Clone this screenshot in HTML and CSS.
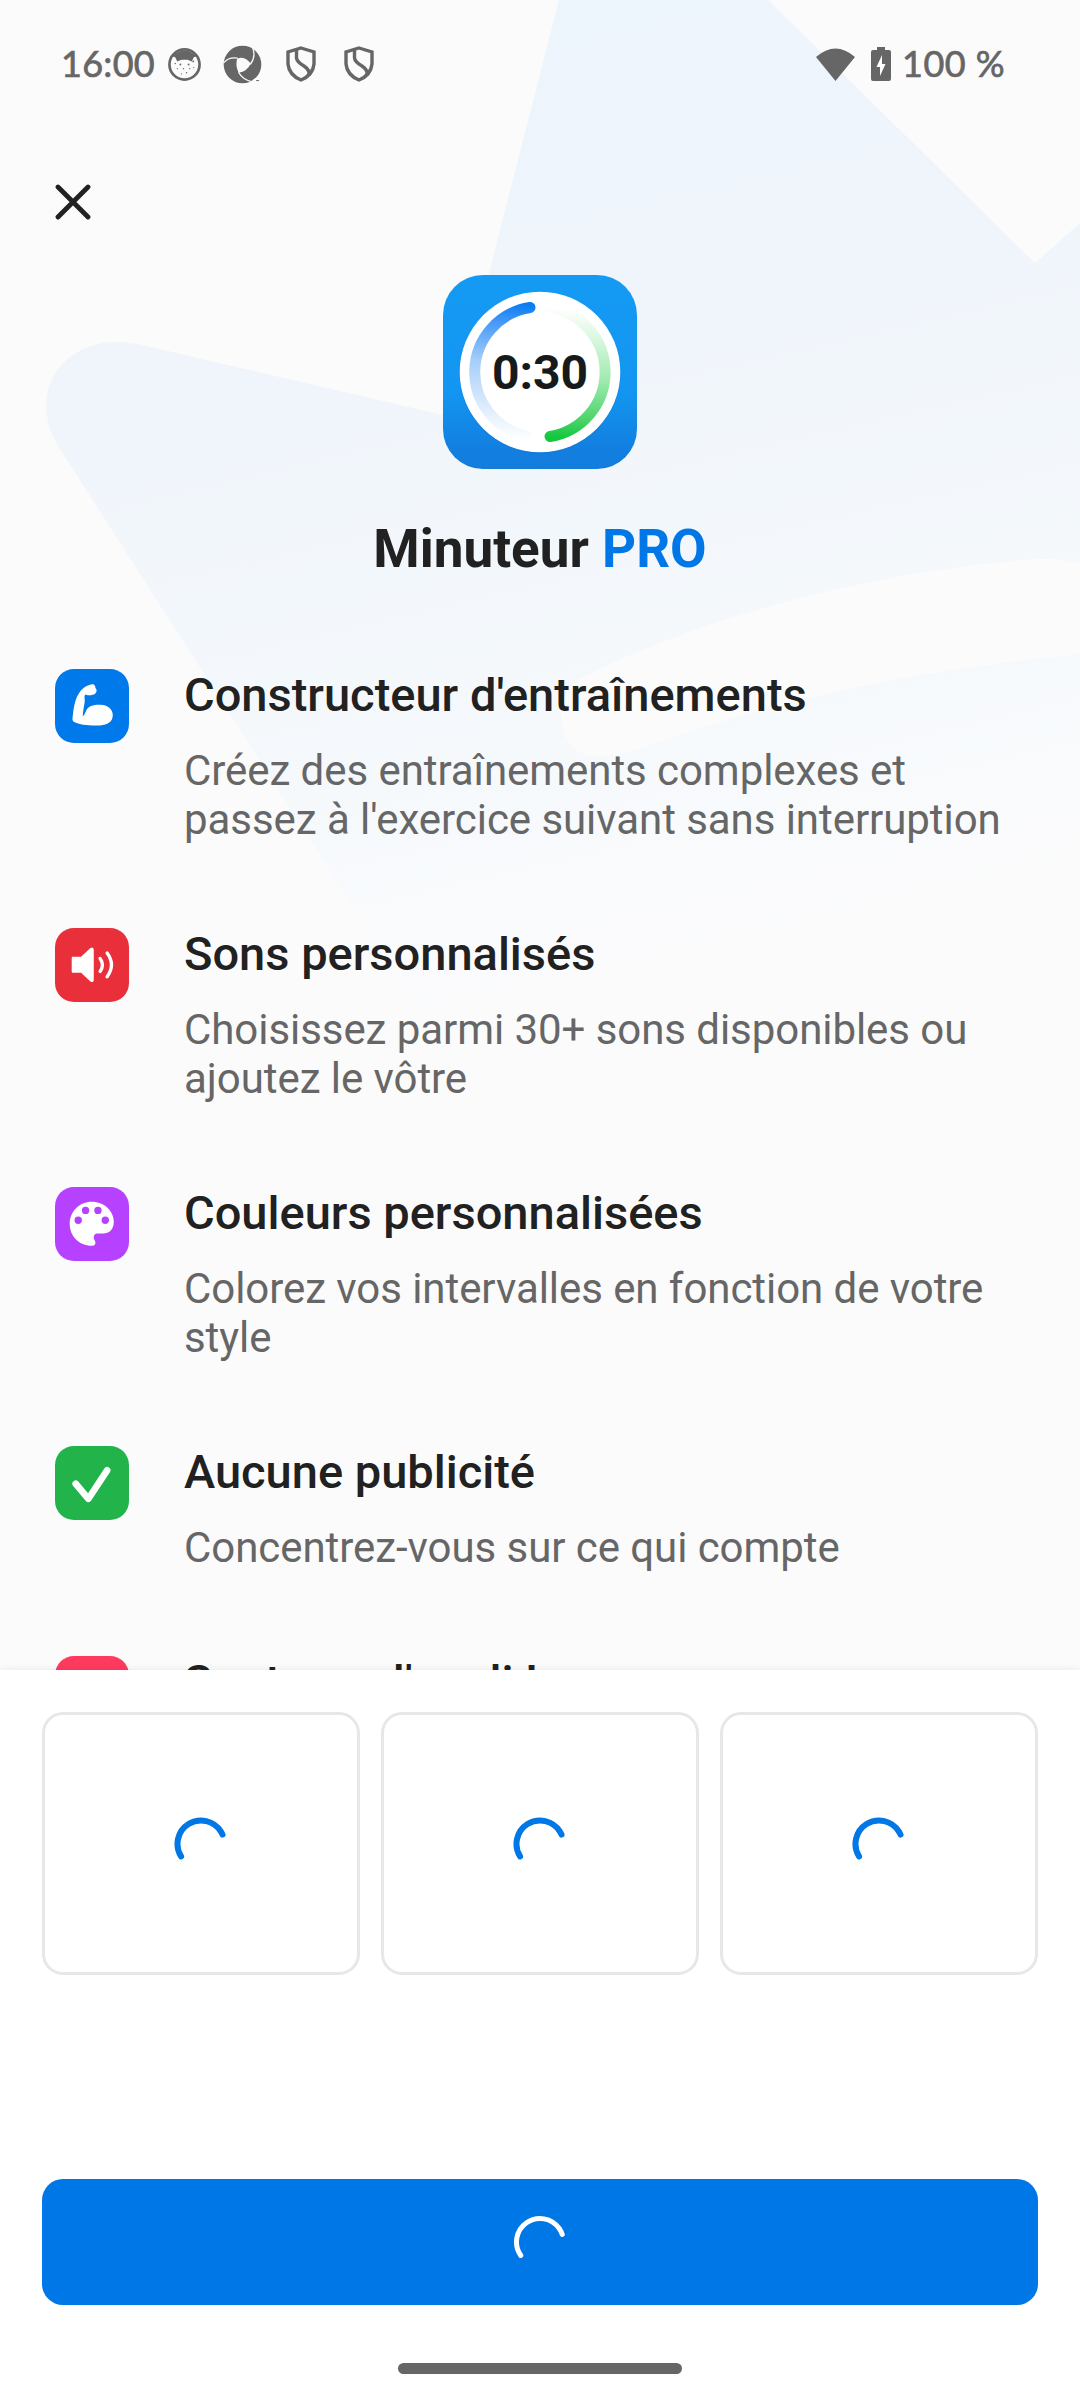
FILE: index.html
```html
<!DOCTYPE html>
<html lang="fr">
<head>
<meta charset="utf-8">
<title>Minuteur PRO</title>
<link rel="stylesheet" href="styles.css">
</head>
<body>
<div class="screen">
  <svg class="backdrop" viewBox="0 0 1080 1100" aria-hidden="true">
    <defs>
      <linearGradient id="fade" gradientUnits="userSpaceOnUse" x1="420" y1="0" x2="640" y2="960">
        <stop offset="0" stop-color="#ecf4fd"/>
        <stop offset=".35" stop-color="#f0f5fb"/>
        <stop offset=".75" stop-color="#f5f9fc"/>
        <stop offset="1" stop-color="#fbfbfc"/>
      </linearGradient>
    </defs>
    <path fill="url(#fade)" fill-rule="evenodd" d="M559 0H768L1035 263L1080 223V1100H477L58 446C25 390 65 330 138 344L452 417Z M1080 563C1060 558 1040 558 1015 561C880 573 720 610 585 676C560 690 557 712 565 735C572 755 595 764 640 749C760 704 900 672 1080 654Z"/>
    <path fill="#fbfbfb" opacity=".45" d="M1080 845C900 880 740 950 620 1040V1100H1080Z"/>
  </svg>

  <header class="status">
    <div class="status-left">
      <span class="clock">16:00</span>
      <svg class="s-cat" viewBox="0 0 32 32"><circle cx="16" cy="16" r="14.6" fill="none" stroke="#666" stroke-width="2.6"/><path fill="#666" d="M4 8Q16-3 28 8L25 9L23 13L19 11.500H13L9 13L7 9Z"/><g fill="#666"><circle cx="12" cy="16" r=".9"/><circle cx="20" cy="16" r=".9"/><circle cx="24.500" cy="13" r=".9"/><circle cx="7" cy="15" r=".7"/><circle cx="9" cy="20" r=".6"/><circle cx="15" cy="20" r=".7"/><circle cx="21" cy="20" r=".6"/><circle cx="25" cy="19" r=".6"/><circle cx="13" cy="25" r=".6"/><circle cx="18" cy="24" r=".7"/></g></svg>
      <svg class="s-swirl" viewBox="0 0 40 40"><circle cx="20" cy="20" r="19.300" fill="#666"/><path fill="#fbfbfb" d="M14.500 14Q22 11 28.500 19Q25 27 16 28.500Q12.500 21 14.500 14Z"/><path d="M1 18Q6 12 15 13.500M30.500 3Q34 12 28 20M16 28Q20 36 31 38" fill="none" stroke="#fbfbfb" stroke-width="1.300"/><path fill="#fbfbfb" d="M27 40L32 34.500L40 32V40Z"/><path stroke="#666" d="M34 36.500h3"/></svg>
      <svg class="s-shield" viewBox="0 0 30 36"><path d="M15 2L28 6V18Q27 29 15 34Q3 29 2 18V6Z"/><path d="M10.500 4V12Q11 16 18 20Q24 24 23 29"/></svg>
      <svg class="s-shield" viewBox="0 0 30 36"><path d="M15 2L28 6V18Q27 29 15 34Q3 29 2 18V6Z"/><path d="M10.500 4V12Q11 16 18 20Q24 24 23 29"/></svg>
    </div>
    <div class="status-right">
      <svg class="s-wifi" viewBox="0 0 39 33"><path fill="#666" d="M0 9Q19.500-8 39 9L19.500 33Z"/></svg>
      <svg class="s-battery" viewBox="0 0 20 34"><path fill="#666" d="M6 0H14V3H18Q20 3 20 5V32Q20 34 18 34H2Q0 34 0 32V5Q0 3 2 3H6Z"/><path fill="#fff" d="M11 8L5.500 20H9V29L14.500 17H11Z"/></svg>
      <span class="level">100 %</span>
    </div>
  </header>

  <main class="content">
    <svg class="close" viewBox="0 0 36 36"><path d="M3 3L33 33M33 3L3 33" stroke="#212121" stroke-width="4.800" stroke-linecap="round"/></svg>

    <svg class="logo" viewBox="0 0 194 194">
      <defs>
        <linearGradient id="tile" x1="0" y1="0" x2="0" y2="1"><stop offset="0" stop-color="#159af4"/><stop offset=".6" stop-color="#1296f1"/><stop offset=".9" stop-color="#127fe0"/><stop offset="1" stop-color="#127ddd"/></linearGradient>
        <linearGradient id="blueArc" gradientUnits="userSpaceOnUse" x1="88" y1="30" x2="75" y2="164"><stop offset="0" stop-color="#0a7df2"/><stop offset=".12" stop-color="#3b93f6"/><stop offset=".45" stop-color="#a5cefa"/><stop offset=".8" stop-color="#e0edfd"/><stop offset="1" stop-color="#fff"/></linearGradient>
        <linearGradient id="greenArc" gradientUnits="userSpaceOnUse" x1="115" y1="33" x2="106" y2="162"><stop offset="0" stop-color="#fff"/><stop offset=".2" stop-color="#ddf7e2"/><stop offset=".55" stop-color="#9be9ad"/><stop offset=".85" stop-color="#4bd369"/><stop offset="1" stop-color="#13c83d"/></linearGradient>
      </defs>
      <rect width="194" height="194" rx="40" fill="url(#tile)"/>
      <circle cx="97" cy="98" r="80.500" fill="#0c6fc9" opacity=".35"/>
      <circle cx="97" cy="97" r="80.300" fill="#fff"/>
      <path d="M87 32.500A65.300 65.300 0 0 0 83 160.800" fill="none" stroke="url(#blueArc)" stroke-width="11" stroke-linecap="round"/>
      <path d="M107 32.500A65.300 65.300 0 0 1 107 161.500" fill="none" stroke="url(#greenArc)" stroke-width="11" stroke-linecap="round"/>
      <text x="97" y="114" text-anchor="middle" class="logo-time">0:30</text>
    </svg>

    <h1 class="title">Minuteur <span class="pro">PRO</span></h1>

    <ul class="features">
      <li class="feature">
        <svg class="badge blue" viewBox="0 0 220 220"><path fill="#fff" d="M110 46C117 44 121 50 121 57C126 62 126 69 120 74C114 79 96 80 91 76C86 81 90 88 89 98C86 115 84 127 83 142C90 137 91 128 96 120C104 108 122 106 136 107C157 107 173 121 173 138C173 158 157 168 135 169C105 170 75 168 56 158C50 153 53 145 54 134C57 105 64 77 82 60C92 50 101 49 110 46Z"/></svg>
        <div class="copy"><h2>Constructeur d'entraînements</h2><p>Créez des entraînements complexes et<br>passez à l'exercice suivant sans interruption</p></div>
      </li>
      <li class="feature">
        <svg class="badge red" viewBox="0 0 220 220"><path fill="#fff" d="M53 86H78L106 60Q116 55 116 66V155Q116 165 106 160L78 134H53Q50 134 50 130V90Q50 86 53 86Z"/><path d="M135 91Q149 110 135 130M156 75Q182 110 156 146" fill="none" stroke="#fff" stroke-width="10" stroke-linecap="round"/></svg>
        <div class="copy"><h2>Sons personnalisés</h2><p>Choisissez parmi 30+ sons disponibles ou<br>ajoutez le vôtre</p></div>
      </li>
      <li class="feature">
        <svg class="badge purple" viewBox="0 0 220 220"><path fill="#fff" d="M110 44C148 44 176 72 176 104C176 127 163 139 144 139H126C116 140 114 150 118 158C125 170 119 176 110 176C72 176 44 147 44 110S73 44 110 44Z"/><g fill="#b641ff"><circle cx="91.500" cy="70" r="11"/><circle cx="128.500" cy="70" r="11"/><circle cx="69.500" cy="99.500" r="11"/><circle cx="150.500" cy="99.500" r="11"/></g></svg>
        <div class="copy"><h2>Couleurs personnalisées</h2><p>Colorez vos intervalles en fonction de votre<br>style</p></div>
      </li>
      <li class="feature">
        <svg class="badge green" viewBox="0 0 220 220"><path d="M62 113L100 158L156 73" fill="none" stroke="#fff" stroke-width="20" stroke-linecap="round" stroke-linejoin="round"/></svg>
        <div class="copy"><h2>Aucune publicité</h2><p>Concentrez-vous sur ce qui compte</p></div>
      </li>
      <li class="feature">
        <svg class="badge pink" viewBox="0 0 220 220"></svg>
        <div class="copy"><h2>Soutenez l'appli !</h2></div>
      </li>
    </ul>
  </main>

  <section class="sheet">
    <div class="plans">
      <div class="plan"><svg class="spinner" viewBox="0 0 54 54"><circle cx="27" cy="27" r="23.500" stroke-dasharray="76.900 200" transform="rotate(148 27 27)"/></svg></div>
      <div class="plan"><svg class="spinner" viewBox="0 0 54 54"><circle cx="27" cy="27" r="23.500" stroke-dasharray="76.900 200" transform="rotate(148 27 27)"/></svg></div>
      <div class="plan"><svg class="spinner" viewBox="0 0 54 54"><circle cx="27" cy="27" r="23.500" stroke-dasharray="76.900 200" transform="rotate(148 27 27)"/></svg></div>
    </div>
    <div class="buy"><svg class="spinner white" viewBox="0 0 54 54"><circle cx="27" cy="27" r="23.500" stroke-dasharray="80 200" transform="rotate(145 27 27)"/></svg></div>
    <div class="nav-handle"></div>
  </section>
</div>
</body>
</html>
```
FILE: styles.css
```css
* { box-sizing: border-box; margin: 0; padding: 0; }
body { font-family: Roboto, sans-serif; background: #fbfbfb; }
svg { display: block; flex: none; }

.screen {
  position: relative;
  width: 1080px;
  height: 2400px;
  display: flex;
  flex-direction: column;
  overflow: hidden;
  background: #fbfbfb;
}
.backdrop { position: absolute; left: 0; top: 0; width: 1080px; height: 1100px; }

.status {
  position: relative;
  flex: none;
  height: 128px;
  padding: 0 74px 0 61px;
  display: flex;
  justify-content: space-between;
  color: #666;
  font-family: Lato, sans-serif;
  font-size: 36px;
  font-weight: 400;
  line-height: 126px;
}
.status-left, .status-right { display: flex; align-items: center; height: 128px; }
.clock { width: 107px; padding-bottom: 2px; letter-spacing: .3px; -webkit-text-stroke: .7px #666; }
.s-cat { width: 33px; height: 33px; margin-right: 22px; }
.s-swirl { width: 39px; height: 39px; margin-right: 24px; }
.s-shield { width: 30px; height: 36px; margin-right: 28px; fill: none; stroke: #666; stroke-width: 3.4; }
.s-wifi { width: 39px; height: 33px; margin-right: 16px; }
.s-battery { width: 20px; height: 34px; margin-right: 11px; }
.level { width: 104px; padding-bottom: 3px; letter-spacing: .5px; white-space: nowrap; -webkit-text-stroke: .7px #666; }

.content {
  position: relative;
  height: 1542px;
  flex: none;
  overflow: hidden;
  padding: 55.500px 55px 0;
  display: flex;
  flex-direction: column;
}
.close { width: 36px; height: 36px; }
.logo { width: 194px; height: 194px; margin: 55.500px auto 0; }
.logo-time { font: 700 48px Roboto, sans-serif; fill: #161a1a; }
.title {
  margin-top: 48px;
  height: 64px;
  line-height: 64px;
  text-align: center;
  font-size: 53px;
  font-weight: 700;
  color: #212121;
}
.pro { color: #0077e6; }

.features { list-style: none; margin-top: 88px; }
.feature { display: flex; gap: 55.500px; padding-bottom: 57px; }
.badge { width: 73.500px; height: 73.500px; border-radius: 19px; }
.blue { background: #007aeb; }
.red { background: #e92f3a; }
.purple { background: #b641ff; }
.green { background: #22b34a; }
.pink { background: #ff3a5f; }
.copy { white-space: nowrap; }
.copy h2 { font-size: 47px; line-height: 52px; font-weight: 500; color: #212121; }
.copy p { margin-top: 25px; padding-bottom: 27px; font-size: 42px; letter-spacing: -.06px; line-height: 49px; color: #666; }

.sheet {
  position: relative;
  flex: 1;
  background: #fff;
  padding: 42px 42px 0;
  box-shadow: 0 0 8px rgba(0, 0, 0, .08);
  display: flex;
  flex-direction: column;
}
.plans { display: grid; grid-template-columns: repeat(3, 318px); gap: 21px; height: 263px; }
.plan { display: flex; align-items: center; justify-content: center; border: 3px solid #e7e7e7; border-radius: 21px; }
.spinner { width: 54px; height: 54px; fill: none; stroke: #0077e6; stroke-width: 6; stroke-linecap: round; }
.white { stroke: #fff; stroke-width: 5; }
.buy {
  margin-top: 204px;
  height: 126px;
  border-radius: 21px;
  background: #0077e6;
  display: flex;
  align-items: center;
  justify-content: center;
}
.nav-handle { width: 284px; height: 11px; margin: 58px auto 0; border-radius: 6px; background: #666; }
```
